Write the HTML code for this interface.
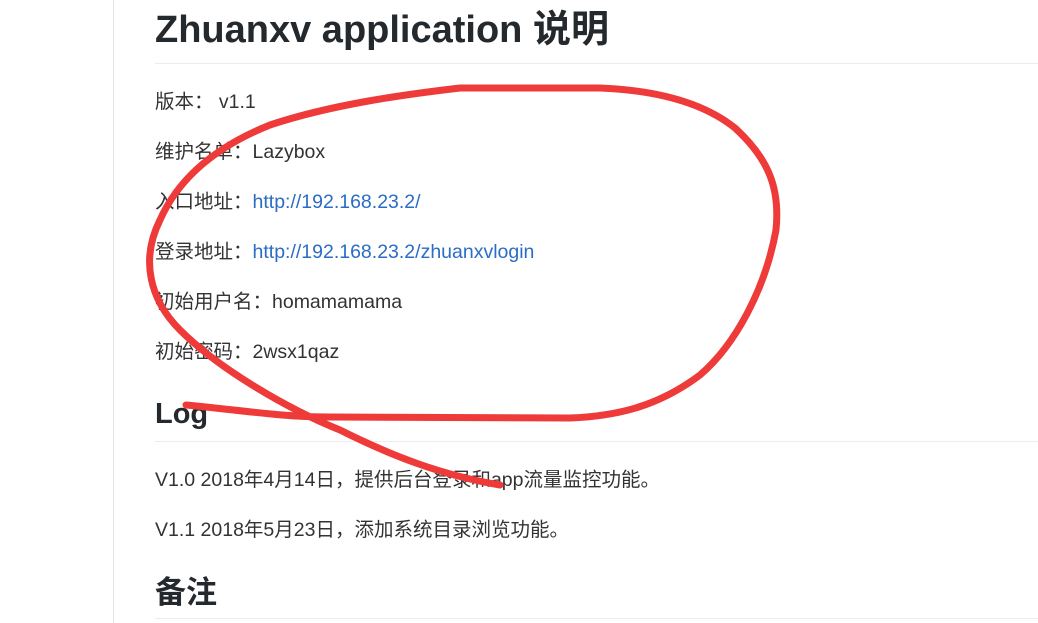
<!DOCTYPE html>
<html><head><meta charset="utf-8"><style>
body{margin:0;width:1038px;height:623px;overflow:hidden;background:#fff;font-family:"Liberation Sans","Noto Sans CJK SC",sans-serif;color:#24292e;position:relative}
.vl{position:absolute;left:113px;top:0;width:1px;height:623px;background:#e4e4e4}
.t{position:absolute;left:155px;white-space:nowrap;line-height:24px}
.hr{position:absolute;left:155px;right:0;height:1px;background:#eaecef}
p{margin:0;font-size:19.5px;color:#333}
a{color:#2a6cc6;text-decoration:none}
</style></head><body>
<div class="vl"></div>
<div class="t" style="top:10px;font-size:38px;line-height:40px;font-weight:600">Zhuanxv application 说明</div>
<div class="hr" style="top:63px"></div>
<div class="t" style="top:90px"><p>版本：&nbsp;v1.1</p></div>
<div class="t" style="top:140px"><p>维护名单：Lazybox</p></div>
<div class="t" style="top:190px"><p>入口地址：<a>http://192.168.23.2/</a></p></div>
<div class="t" style="top:240px"><p>登录地址：<a>http://192.168.23.2/zhuanxvlogin</a></p></div>
<div class="t" style="top:290px"><p>初始用户名：homamamama</p></div>
<div class="t" style="top:340px"><p>初始密码：2wsx1qaz</p></div>
<div class="t" style="top:398px;font-size:29px;line-height:32px;font-weight:600">Log</div>
<div class="hr" style="top:441px"></div>
<div class="t" style="top:468px"><p>V1.0 2018年4月14日，提供后台登录和app流量监控功能。</p></div>
<div class="t" style="top:518px"><p>V1.1 2018年5月23日，添加系统目录浏览功能。</p></div>
<div class="t" style="top:576px;font-size:31px;line-height:34px;font-weight:600">备注</div>
<div class="hr" style="top:618px"></div>
<svg style="position:absolute;left:0;top:0" width="1038" height="623"><path d="M186,405 C240,410 280,417 330,417 L570,418 C620,416 660,405 700,375 C735,345 765,290 776,230 C780,190 770,160 735,128 C700,100 650,90 600,88 L460,88 C400,95 330,105 270,125 C220,145 180,175 160,220 C140,260 150,300 180,330 C220,370 290,410 340,430 C390,455 440,475 500,485" fill="none" stroke="#ef3a3a" stroke-width="7" stroke-linecap="round"/></svg>
</body></html>
